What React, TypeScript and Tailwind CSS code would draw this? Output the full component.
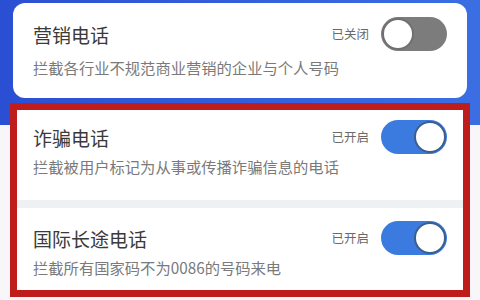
import React from 'react';

type Item = {
  title: string;
  desc: string;
  on: boolean;
};

const Toggle: React.FC<{ on: boolean }> = ({ on }) => (
  <div
    className={`flex h-[34px] w-[66px] items-center rounded-full p-[1px] ${
      on ? 'justify-end bg-[#3b7be0]' : 'justify-start bg-[#7c7c7c]'
    }`}
  >
    <div
      className={`h-[32px] w-[32px] rounded-full border-2 bg-white ${
        on ? 'border-[#3d5d8c]' : 'border-[#707070]'
      }`}
    />
  </div>
);

const Row: React.FC<{ item: Item }> = ({ item }) => (
  <div className="flex h-[34px] items-center justify-between">
    <span className="text-[19px] leading-none text-[#3a3a3a]">{item.title}</span>
    <div className="flex items-center gap-[12px]">
      <span className="text-[12.5px] leading-none text-[#6a6a6a]">{item.on ? '已开启' : '已关闭'}</span>
      <Toggle on={item.on} />
    </div>
  </div>
);

const marketing: Item = {
  title: '营销电话',
  desc: '拦截各行业不规范商业营销的企业与个人号码',
  on: false,
};

const fraud: Item = {
  title: '诈骗电话',
  desc: '拦截被用户标记为从事或传播诈骗信息的电话',
  on: true,
};

const intl: Item = {
  title: '国际长途电话',
  desc: '拦截所有国家码不为0086的号码来电',
  on: true,
};

export default function App() {
  return (
    <div
      className="h-[300px] w-[480px] overflow-hidden bg-[linear-gradient(to_bottom,transparent_125px,#f7f7f9_125px),linear-gradient(to_right,#2b4fd2,#3b6ee3)] pt-[3px]"
      style={{ fontFamily: '"Noto Sans CJK SC", "Noto Sans", sans-serif' }}
    >
      <div className="mx-[13px] h-[95px] rounded-[12px] bg-white px-[20px] pt-[14px]">
        <Row item={marketing} />
        <p className="mt-[6px] text-[15.3px] leading-[20px] text-[#7a7a7a]">{marketing.desc}</p>
      </div>

      <div className="mx-[10px] mt-[5px] flex flex-col border-[7px] border-[#bf1c1c] bg-[#eef0f3]">
        <div className="h-[90px] bg-white px-[16px] pt-[10px]">
          <Row item={fraud} />
          <p className="mt-[2px] text-[15.3px] leading-[20px] text-[#7a7a7a]">{fraud.desc}</p>
        </div>
        <div className="mt-[8px] h-[82px] bg-white px-[16px] pt-[13px]">
          <Row item={intl} />
          <p className="mt-[2px] text-[15.3px] leading-[20px] text-[#7a7a7a]">{intl.desc}</p>
        </div>
      </div>
    </div>
  );
}
